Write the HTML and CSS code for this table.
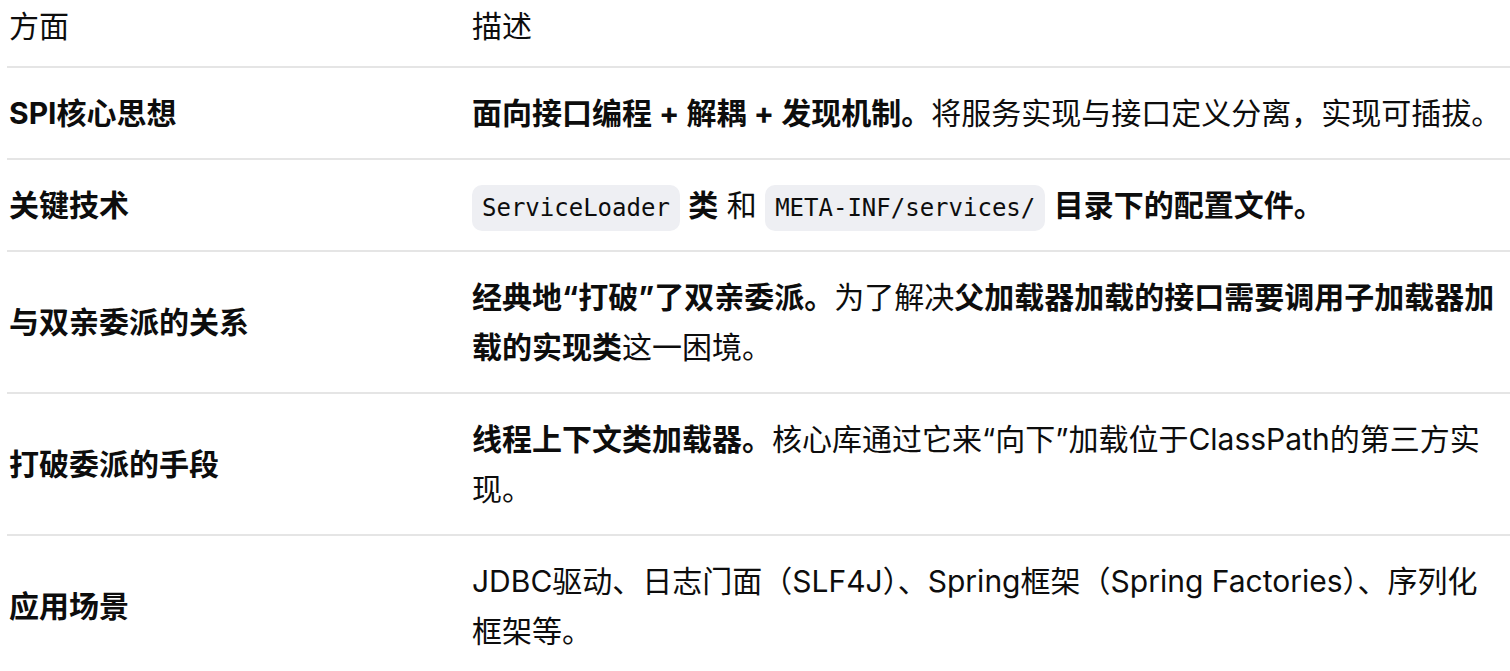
FILE: index.html
```html
<!DOCTYPE html>
<html lang="zh-CN">
<head>
<meta charset="utf-8">
<title>SPI</title>
<link rel="stylesheet" href="styles.css">
</head>
<body>
<div class="wrap">
<table class="tbl">
  <thead>
    <tr>
      <th class="c1">方面</th>
      <th class="c2">描述</th>
    </tr>
  </thead>
  <tbody>
    <tr>
      <td class="c1"><strong>SPI核心思想</strong></td>
      <td class="c2"><strong>面向接口编程 + 解耦 + 发现机制。</strong>将服务实现与接口定义分离，实现可插拔。</td>
    </tr>
    <tr>
      <td class="c1"><strong>关键技术</strong></td>
      <td class="c2"><code>ServiceLoader</code> <strong>类</strong> 和 <code>META-INF/services/</code> <strong>目录下的配置文件。</strong></td>
    </tr>
    <tr>
      <td class="c1"><strong>与双亲委派的关系</strong></td>
      <td class="c2"><strong>经典地“打破”了双亲委派。</strong>为了解决<strong>父加载器加载的接口需要调用子加载器加载的实现类</strong>这一困境。</td>
    </tr>
    <tr>
      <td class="c1"><strong>打破委派的手段</strong></td>
      <td class="c2"><strong>线程上下文类加载器。</strong>核心库通过它来“向下”加载位于ClassPath的第三方实现。</td>
    </tr>
    <tr>
      <td class="c1"><strong>应用场景</strong></td>
      <td class="c2">JDBC驱动、日志门面（SLF4J）、Spring框架（Spring Factories）、序列化框架等。</td>
    </tr>
  </tbody>
</table>
</div>
</body>
</html>
```

FILE: styles.css
```css
html, body {
  margin: 0;
  padding: 0;
  background: #ffffff;
}

body {
  font-family: Inter, "Noto Sans CJK SC", sans-serif;
  font-size: 30px;
  line-height: 50px;
  color: #0d0d0d;
}

.wrap {
  padding-left: 7px;
}

.tbl {
  width: 1503px;
  border-collapse: collapse;
  table-layout: fixed;
}

.tbl th,
.tbl td {
  text-align: left;
  vertical-align: middle;
  border-bottom: 2px solid #e5e5e5;
}

.tbl th {
  font-weight: 400;
  padding: 1px 0 15px 0;
}

.tbl td {
  padding: 20px 0 20px 0;
}

.tbl .c1 {
  width: 463px;
  padding-left: 2px;
}

.tbl .c2 {
  padding-right: 5px;
}

.tbl strong {
  font-weight: 700;
}

.tbl code {
  font-family: "DejaVu Sans Mono", monospace;
  font-size: 24px;
  line-height: 24px;
  background: #eeeff3;
  border-radius: 10px;
  padding: 9px 10px;
  color: #0d0d0d;
}
```
